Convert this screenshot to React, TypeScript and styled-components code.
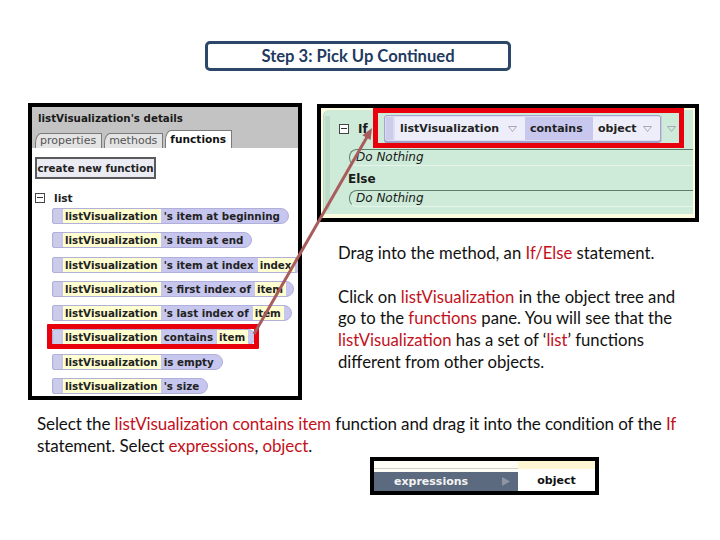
import React from "react";
import styled, { createGlobalStyle } from "styled-components";

const UI = `"DejaVu Sans", "Liberation Sans", sans-serif`;
const BODY = `Lato, "Open Sans", sans-serif`;

const Global = createGlobalStyle`
  html, body { margin: 0; padding: 0; background: #fff; }
  body { width: 720px; height: 540px; overflow: hidden; }
`;

const Page = styled.div`
  position: relative;
  width: 720px;
  height: 540px;
  box-sizing: border-box;
  padding-top: 41px;
  font-family: ${BODY};
`;

const TitleBox = styled.div`
  box-sizing: border-box;
  margin-left: 205px;
  width: 306px;
  height: 30px;
  border: 3px solid #2b4868;
  border-radius: 5px;
  display: flex;
  align-items: center;
  justify-content: center;
  font: 700 16.6px ${BODY};
  color: #1f3a5f;
`;

const Main = styled.div`
  display: flex;
  align-items: flex-start;
  margin-top: 32px;
  padding-left: 28px;
`;

/* ---------- left details panel ---------- */
const DetailsPanel = styled.div`
  box-sizing: border-box;
  width: 274px;
  height: 297px;
  border: 4px solid #000;
  background: #fff;
  display: flex;
  flex-direction: column;
  overflow: hidden;
  font-family: ${UI};
`;

const PanelHeader = styled.div`
  height: 23px;
  line-height: 23px;
  padding-left: 6px;
  background: #c3c3c3;
  font-size: 10.3px;
  font-weight: 700;
  color: #1a1a1a;
`;

const TabRow = styled.div`
  height: 18px;
  background: #c3c3c3;
  display: flex;
  align-items: flex-end;
  padding-left: 3px;
  gap: 2px;
`;

const Tab = styled.div<{ $active?: boolean }>`
  box-sizing: border-box;
  height: ${(p) => (p.$active ? 18 : 15)}px;
  line-height: ${(p) => (p.$active ? 16 : 14)}px;
  padding: 0 5px 0 4px;
  background: ${(p) => (p.$active ? "#fff" : "#e4e4e4")};
  border: 1px solid #7a7a7a;
  border-bottom: none;
  border-top-left-radius: 6px 10px;
  font-size: ${(p) => (p.$active ? 10.6 : 11)}px;
  font-weight: ${(p) => (p.$active ? 700 : 400)};
  color: ${(p) => (p.$active ? "#111" : "#555")};
`;

const PanelBody = styled.div`
  flex: 1;
  padding: 9px 0 0 3px;
`;

const CreateButton = styled.div`
  box-sizing: border-box;
  display: inline-flex;
  align-items: center;
  justify-content: center;
  width: 121px;
  height: 22px;
  border: 2px solid #5a5a5a;
  background: #ebebf3;
  font-size: 10.3px;
  font-weight: 700;
  color: #222;
  white-space: nowrap;
`;

const TreeHead = styled.div`
  display: flex;
  align-items: center;
  gap: 9px;
  margin-top: 13px;
  height: 11px;
  font-size: 10.6px;
  font-weight: 700;
  color: #222;
`;

const MinusBox = styled.span`
  position: relative;
  box-sizing: border-box;
  display: inline-block;
  width: 10px;
  height: 10px;
  border: 1px solid #444;
  background: #fff;
  flex: none;
  &::after {
    content: "";
    position: absolute;
    left: 1px;
    right: 1px;
    top: 3.5px;
    height: 1px;
    background: #333;
  }
`;

const RowList = styled.div`
  display: flex;
  flex-direction: column;
  align-items: flex-start;
  gap: 8.3px;
  margin-top: 5px;
  padding-left: 17px;
`;

const Pill = styled.div<{ $hl?: boolean }>`
  position: relative;
  box-sizing: border-box;
  display: inline-flex;
  align-items: center;
  height: 16px;
  padding: 0 4px 0 1px;
  background: #c6c6ef;
  border: 1px solid #b0b0da;
  border-radius: 2px 8px 8px 2px;
  font-size: 10.3px;
  font-weight: 700;
  color: #222;
  white-space: nowrap;
  &::after {
    content: "";
    display: ${(p) => (p.$hl ? "block" : "none")};
    position: absolute;
    left: -6px;
    right: -4px;
    top: -6px;
    bottom: -5px;
    border: 5px solid #e8000c;
    border-radius: 1px;
  }
`;

const Grip = styled.span<{ $h?: number }>`
  display: inline-block;
  width: 7px;
  height: ${(p) => p.$h ?? 14}px;
  flex: none;
  margin-right: 2px;
  background-color: #dcdcf6;
  background-image: radial-gradient(#8c8cc0 0.55px, transparent 0.75px);
  background-size: 2px 2px;
`;

const Slot = styled.span`
  display: inline-block;
  height: 14px;
  line-height: 14px;
  padding: 0 3px 0 2px;
  background: #ffffcf;
  margin-right: 3px;
`;

const Word = styled.span`
  margin-right: 4px;
`;

/* ---------- right if/else panel ---------- */
const RightCol = styled.div`
  margin-left: 15px;
  margin-top: 1px;
  width: 382px;
`;

const IfPanel = styled.div`
  box-sizing: border-box;
  width: 382px;
  height: 118px;
  border: 4px solid #000;
  background: #fffbe0;
  padding: 2px 2px 4px 2px;
  font-family: ${UI};
`;

const Green = styled.div`
  height: 100%;
  display: flex;
  background: #cdebd8;
  border-top-left-radius: 6px;
  border-left: 1px solid #b8d8c4;
`;

const GreenGrip = styled.span`
  width: 5px;
  margin: 6px 0 4px 1px;
  flex: none;
  background-image: radial-gradient(#8aa898 0.55px, transparent 0.75px);
  background-size: 2px 2px;
`;

const GreenBody = styled.div`
  flex: 1;
  display: flex;
  flex-direction: column;
  padding-left: 4px;
`;

const IfRow = styled.div`
  display: flex;
  align-items: center;
  height: 41px;
  margin-top: -2px;
  padding-left: 5px;
  font-size: 12px;
  font-weight: 700;
  color: #1a1a1a;
`;

const IfWord = styled.span`
  margin-left: 9px;
  width: 15px;
`;

const RedBox = styled.div`
  box-sizing: border-box;
  width: 311px;
  height: 40px;
  margin-bottom: 1px;
  border: 5px solid #e8000c;
  padding: 2px 0 0 6px;
  display: flex;
  align-items: flex-start;
`;

const Block = styled.div`
  box-sizing: border-box;
  display: flex;
  align-items: stretch;
  height: 27px;
  padding: 1px 0 1px 1px;
  background: #dcdcf4;
  border: 1px solid #a4a4cc;
  border-radius: 3px;
  box-shadow: 0 1px 0 #9c9cbc;
  font-size: 11px;
  font-weight: 700;
  color: #222;
`;

const Seg = styled.span<{ $w: number; $dark?: boolean }>`
  box-sizing: border-box;
  display: flex;
  align-items: center;
  justify-content: space-between;
  width: ${(p) => p.$w}px;
  padding: 0 8px 0 5px;
  background: ${(p) => (p.$dark ? "#c8c8ef" : "#eeeefa")};
`;

const Caret = () => (
  <svg width="9" height="6" viewBox="0 0 9 6" style={{ flex: "none" }}>
    <path d="M0.5 0.5 H8.5 L4.5 5.5 Z" fill="none" stroke="#a8a8b8" strokeWidth="1" />
  </svg>
);

const TailCaret = styled.span`
  display: flex;
  align-items: center;
  height: 27px;
  padding-left: 5px;
  border-left: 1px solid #c8c8d8;
`;

const DoNothing = styled.div`
  box-sizing: border-box;
  margin-left: 15px;
  height: 17px;
  line-height: 15px;
  padding-left: 6px;
  border-top: 1px solid #5e7e6e;
  border-left: 1px solid #5e7e6e;
  border-bottom: 1px solid #e6f4ec;
  border-radius: 8px 0 0 8px;
  font-size: 12px;
  font-style: italic;
  color: #1a1a1a;
`;

const ElseRow = styled.div`
  height: 24px;
  line-height: 26px;
  padding-left: 14px;
  font-size: 12px;
  font-weight: 700;
  color: #1a1a1a;
`;

/* ---------- text ---------- */
const Para = styled.p<{ $mt: number }>`
  margin: ${(p) => p.$mt}px 0 0 21px;
  font-family: ${BODY};
  font-size: 16.7px;
  line-height: 21.8px;
  color: #111;
  white-space: nowrap;
`;

const Red = styled.span`
  color: #c3111c;
`;

const BottomPara = styled.p`
  margin: 13px 0 0 37px;
  font-family: ${BODY};
  font-size: 17px;
  line-height: 22px;
  letter-spacing: -0.1px;
  color: #111;
  white-space: nowrap;
`;

/* ---------- expressions strip ---------- */
const ExprBox = styled.div`
  box-sizing: border-box;
  margin: 0 0 0 370px;
  width: 229px;
  height: 38px;
  border: 4px solid #000;
  background: #fffef6;
  display: grid;
  grid-template-columns: 144px 1fr;
  font-family: ${UI};
  font-size: 11px;
  font-weight: 700;
`;

const ExprLeft = styled.div`
  display: flex;
  flex-direction: column;
`;

const ExprTopLine = styled.div`
  height: 7px;
  border-bottom: 1px solid #cfcfc8;
  margin-bottom: 3px;
`;

const ExprBar = styled.div`
  flex: 1;
  display: flex;
  align-items: center;
  justify-content: space-between;
  padding: 0 8px 0 20px;
  background: #5b6a7e;
  color: #f4f4f4;
`;

const ExprRight = styled.div`
  display: flex;
  flex-direction: column;
`;

const ExprTab = styled.div`
  height: 8px;
  background: #fff6d4;
`;

const ExprObject = styled.div`
  flex: 1;
  display: flex;
  align-items: center;
  justify-content: center;
  background: #fff;
  border-bottom-right-radius: 5px;
  color: #111;
`;

const Overlay = styled.svg`
  position: absolute;
  left: 0;
  top: 0;
  pointer-events: none;
`;

const rows: { words: string[]; tail?: string; hl?: boolean }[] = [
  { words: ["'s item at beginning"] },
  { words: ["'s item at end"] },
  { words: ["'s item at index"], tail: "index" },
  { words: ["'s first index of"], tail: "item" },
  { words: ["'s last index of"], tail: "item" },
  { words: ["contains"], tail: "item", hl: true },
  { words: ["is empty"] },
  { words: ["'s size"] },
];

export default function App() {
  return (
    <Page>
      <Global />
      <TitleBox>Step 3: Pick Up Continued</TitleBox>
      <Main>
        <DetailsPanel>
          <PanelHeader>listVisualization's details</PanelHeader>
          <TabRow>
            <Tab>properties</Tab>
            <Tab>methods</Tab>
            <Tab $active>functions</Tab>
          </TabRow>
          <PanelBody>
            <CreateButton>create new function</CreateButton>
            <TreeHead>
              <MinusBox />
              <span>list</span>
            </TreeHead>
            <RowList>
              {rows.map((r, i) => (
                <Pill key={i} $hl={r.hl}>
                  <Grip />
                  <Slot>listVisualization</Slot>
                  <Word>{r.words[0]}</Word>
                  {r.tail && <Slot>{r.tail}</Slot>}
                </Pill>
              ))}
            </RowList>
          </PanelBody>
        </DetailsPanel>

        <RightCol>
          <IfPanel>
            <Green>
              <GreenGrip />
              <GreenBody>
                <IfRow>
                  <MinusBox />
                  <IfWord>If</IfWord>
                  <RedBox>
                    <Block>
                      <Grip $h={23} />
                      <Seg $w={130}>
                        listVisualization <Caret />
                      </Seg>
                      <Seg $w={68} $dark>
                        contains
                      </Seg>
                      <Seg $w={67}>
                        object <Caret />
                      </Seg>
                    </Block>
                    <TailCaret>
                      <Caret />
                    </TailCaret>
                  </RedBox>
                </IfRow>
                <DoNothing>Do Nothing</DoNothing>
                <ElseRow>Else</ElseRow>
                <DoNothing>Do Nothing</DoNothing>
              </GreenBody>
            </Green>
          </IfPanel>
          <Para $mt={21}>
            Drag into the method, an <Red>If/Else</Red> statement.
          </Para>
          <Para $mt={21.8}>
            Click on <Red>listVisualization</Red> in the object tree and
            <br />
            go to the <Red>functions</Red> pane. You will see that the
            <br />
            <Red>listVisualization</Red> has a set of ‘<Red>list</Red>’ functions
            <br />
            different from other objects.
          </Para>
        </RightCol>
      </Main>

      <BottomPara>
        Select the <Red>listVisualization contains item</Red> function and drag it into the
        condition of the <Red>If</Red>
        <br />
        statement. Select <Red>expressions</Red>, <Red>object</Red>.
      </BottomPara>

      <ExprBox>
        <ExprLeft>
          <ExprTopLine />
          <ExprBar>
            <span>expressions</span>
            <svg width="8" height="9" viewBox="0 0 8 9">
              <path d="M0 0 L8 4.5 L0 9 Z" fill="#8d96a2" />
            </svg>
          </ExprBar>
        </ExprLeft>
        <ExprRight>
          <ExprTab />
          <ExprObject>object</ExprObject>
        </ExprRight>
      </ExprBox>

      <Overlay width="720" height="540" viewBox="0 0 720 540">
        <line x1="254" y1="334" x2="367" y2="137" stroke="#a85c5c" strokeWidth="3" />
        <polygon points="372,128 370.6,140 362.4,135.3" fill="#a85c5c" />
      </Overlay>
    </Page>
  );
}
